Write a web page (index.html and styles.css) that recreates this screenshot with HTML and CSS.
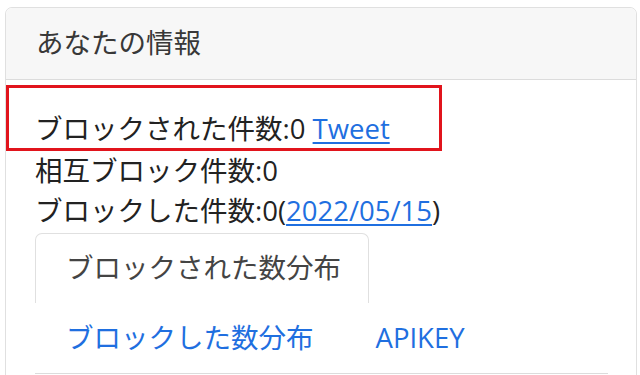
FILE: index.html
```html
<!DOCTYPE html>
<html lang="ja">
<head>
<meta charset="utf-8">
<link rel="stylesheet" href="styles.css">
</head>
<body>
<div class="page">
  <div class="card">
    <div class="card-header">あなたの情報</div>
    <div class="card-body">
      <div class="line highlight">ブロックされた件数:0 <a href="#" class="link">Tweet</a></div>
      <div class="line">相互ブロック件数:0</div>
      <div class="line">ブロックした件数:0(<a href="#" class="link">2022/05/15</a>)</div>
      <ul class="tabs">
        <li class="tab active">ブロックされた数分布</li>
        <li class="tab"><a href="#" class="tab-link">ブロックした数分布</a></li>
        <li class="tab"><a href="#" class="tab-link">APIKEY</a></li>
      </ul>
    </div>
  </div>
</div>
</body>
</html>
```

FILE: styles.css
```css
* { box-sizing: border-box; }
html, body {
  margin: 0;
  padding: 0;
  background: #ffffff;
}
body {
  font-family: "Open Sans", "Noto Sans CJK JP", sans-serif;
  font-size: 27.5px;
  line-height: 40px;
  color: #222222;
}
.page {
  padding: 7px 3px 0 5px;
  height: 375px;
  overflow: hidden;
}
.card {
  border: 1px solid #e0e0e0;
  border-radius: 7px;
  background: #ffffff;
  height: 420px;
}
.card-header {
  background: #f7f7f7;
  border-bottom: 1px solid #dcdcdc;
  border-radius: 7px 7px 0 0;
  padding: 15px 30px 15px 30px;
  color: #383838;
  height: 72px;
}
.card-body {
  padding: 5px 28px 0 29px;
}
.line {
  height: 40px;
  white-space: nowrap;
}
.highlight {
  margin-left: -29px;
  width: 436px;
  height: 66px;
  border: 3px solid #e1141c;
  padding: 21px 0 0 26px;
}
.link {
  color: #1f6fe0;
  text-decoration: underline;
  text-decoration-thickness: 1.5px;
  text-underline-offset: 3px;
}
.tabs {
  list-style: none;
  margin: 2px 0 0 0;
  padding: 0;
  display: flex;
  flex-wrap: wrap;
  border-bottom: 1px solid #dcdcdc;
}
.tab {
  padding: 14px 30px 15px 30px;
  border: 1px solid transparent;
  border-bottom: none;
  border-radius: 7px 7px 0 0;
  white-space: nowrap;
}
.tab.active {
  border-color: #e0e0e0;
  color: #444444;
  width: 334px;
}
.tab-link {
  color: #1f6fe0;
  text-decoration: none;
}
```
